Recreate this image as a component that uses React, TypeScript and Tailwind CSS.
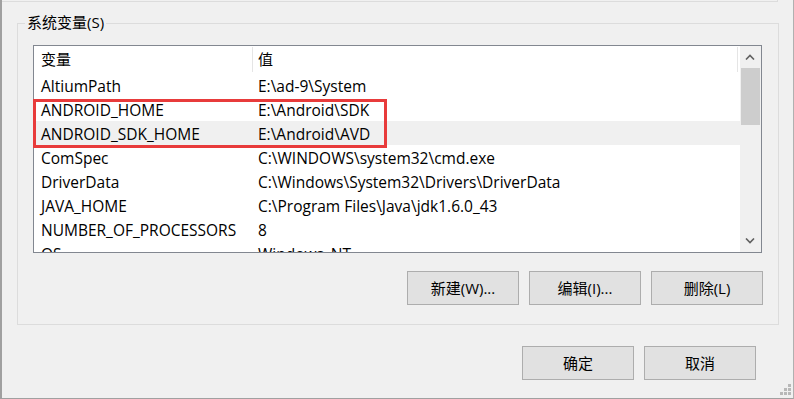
import React from "react";

const font = {fontFamily: '"Open Sans", "Noto Sans CJK SC", sans-serif'};

const rows = [
    {name: "AltiumPath", value: "E:\\ad-9\\System"},
    {name: "ANDROID_HOME", value: "E:\\Android\\SDK"},
    {name: "ANDROID_SDK_HOME", value: "E:\\Android\\AVD", selected: true},
    {name: "ComSpec", value: "C:\\WINDOWS\\system32\\cmd.exe"},
    {name: "DriverData", value: "C:\\Windows\\System32\\Drivers\\DriverData"},
    {name: "JAVA_HOME", value: "C:\\Program Files\\Java\\jdk1.6.0_43"},
    {name: "NUMBER_OF_PROCESSORS", value: "8"},
    {name: "OS", value: "Windows_NT"}
];

function WinButton({label}: { label: string }) {
    return (
        <button
            className="w-[112px] h-[34px] bg-[#e1e1e1] border border-[#adadad] text-[15px] text-black flex items-center justify-center">
            {label}
        </button>
    );
}

function Chevron({up}: { up?: boolean }) {
    return (
        <svg width="10" height="6" viewBox="0 0 10 6">
            <polyline
                points={up ? "1,5.5 5,1.5 9,5.5" : "1,0.5 5,4.5 9,0.5"}
                fill="none"
                stroke="#606060"
                strokeWidth="1.6"
            />
        </svg>
    );
}

export default function App() {
    return (
        <div style={font}
             className="w-[794px] h-[399px] bg-[#f0f0f0] border-l-2 border-b border-r border-l-[#a0a0a0] border-b-[#a0a0a0] border-r-[#b0b0b0] flex flex-col overflow-hidden relative">
            {/* bottom of user-variables group above */}
            <div className="h-[2px] w-[776px] border-b border-r border-[#dcdcdc] shrink-0"/>

            {/* system variables group */}
            <div className="relative mt-[21px] ml-[15px] w-[762px] h-[302px] border border-[#dcdcdc] shrink-0">
                <span className="absolute left-[7px] top-[-12px] bg-[#f0f0f0] px-[2px] text-[15px] leading-[20px] text-black">
                    系统变量(S)
                </span>

                <div className="ml-[15px] mt-[21px] w-[729px] h-[208px] border border-[#828790] bg-white flex relative">
                    <div className="w-[706px] h-full overflow-hidden flex flex-col">
                        <div className="h-[27px] shrink-0 flex text-[15px] text-black">
                            <div className="w-[219px] pl-[7px] flex items-center border-r border-[#e5e5e5] my-[1px]">变量</div>
                            <div className="w-[485px] pl-[5px] flex items-center border-r border-[#e5e5e5] my-[1px]">值</div>
                        </div>
                        {rows.map((r) => (
                            <div key={r.name}
                                 className={"h-[24px] shrink-0 flex items-center text-[15.5px] leading-[22px] pt-[2px] text-black " + (r.selected ? "bg-[#f0f0f0]" : "")}>
                                <div className="w-[219px] pl-[7px] whitespace-nowrap">{r.name}</div>
                                <div className="pl-[5px] whitespace-nowrap">{r.value}</div>
                            </div>
                        ))}
                    </div>
                    {/* scrollbar */}
                    <div className="w-[20px] h-full bg-[#f0f0f0] flex flex-col items-center">
                        <div className="h-[22px] flex items-center justify-center"><Chevron up/></div>
                        <div className="w-[19px] h-[57px] bg-[#cdcdcd]"/>
                        <div className="flex-1"/>
                        <div className="h-[22px] flex items-center justify-center"><Chevron/></div>
                    </div>
                    <div className="w-[1px] h-full bg-[#f0f0f0]"/>

                    {/* highlight frame */}
                    <div className="absolute left-[-1px] top-[53px] w-[354px] h-[49px] border-[3px] border-[#e83b3b]"/>
                </div>

                <div className="mt-[18px] ml-[389px] flex gap-[10px]">
                    <WinButton label="新建(W)..."/>
                    <WinButton label="编辑(I)..."/>
                    <WinButton label="删除(L)"/>
                </div>
            </div>

            <div className="mt-[21px] ml-[520px] flex gap-[10px]">
                <WinButton label="确定"/>
                <WinButton label="取消"/>
            </div>

            {/* size grip */}
            <svg className="absolute right-[2px] bottom-[2px]" width="12" height="12" viewBox="0 0 12 12">
                <rect x="9" y="0" width="3" height="3" fill="#b8b8b8"/>
                <rect x="5" y="4" width="3" height="3" fill="#b8b8b8"/>
                <rect x="9" y="4" width="3" height="3" fill="#b8b8b8"/>
                <rect x="1" y="8" width="3" height="3" fill="#b8b8b8"/>
                <rect x="5" y="8" width="3" height="3" fill="#b8b8b8"/>
                <rect x="9" y="8" width="3" height="3" fill="#b8b8b8"/>
            </svg>
        </div>
    );
}
